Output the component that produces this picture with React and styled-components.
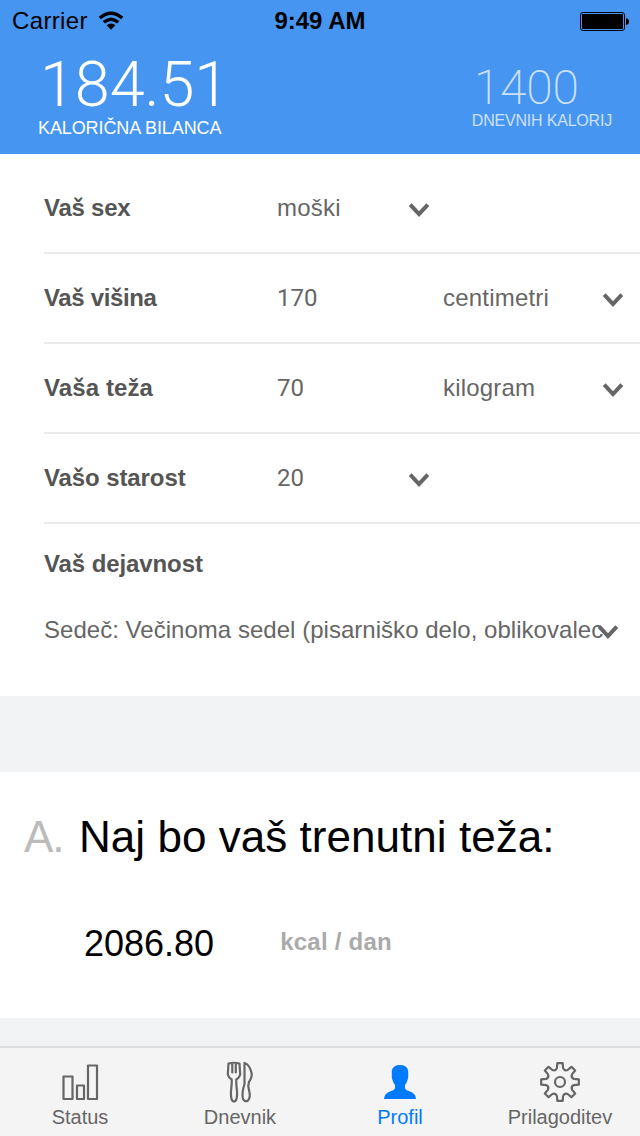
import React from "react";
import styled, { createGlobalStyle } from "styled-components";

const Global = createGlobalStyle`
  * { box-sizing: border-box; }
  body {
    margin: 0;
    background: #f2f3f5;
    font-family: "Liberation Sans", Arial, sans-serif;
    color: #000;
  }
`;

const Screen = styled.div`
  width: 640px;
  height: 1136px;
  display: flex;
  flex-direction: column;
  overflow: hidden;
  background: #f2f3f5;
`;

const Header = styled.header`
  height: 154px;
  background: #4595f1;
  flex: none;
`;

const StatusBar = styled.div`
  height: 40px;
  display: grid;
  grid-template-columns: 1fr auto 1fr;
  align-items: center;
  padding: 1px 11px 0 11px;
  font-size: 24px;
  line-height: 40px;
`;

const Carrier = styled.div`
  display: flex;
  align-items: center;
  gap: 10px;
  padding-left: 1px;
  letter-spacing: 0.35px;
`;

const Clock = styled.div`
  font-weight: 700;
`;

const BatteryIcon = styled.svg`
  justify-self: end;
`;

const Totals = styled.div`
  display: flex;
  justify-content: space-between;
  padding: 0 28px 0 38px;
`;

const Total = styled.div`
  color: #fff;
  padding-top: ${(p) => (p.$small ? 24 : 13)}px;
  opacity: ${(p) => (p.$small ? 0.72 : 1)};
`;

const Amount = styled.div`
  font-family: Roboto, "Liberation Sans", sans-serif;
  font-weight: ${(p) => (p.$small ? 200 : 300)};
  font-size: ${(p) => (p.$small ? 48 : 63)}px;
  line-height: ${(p) => (p.$small ? 47 : 64)}px;
  letter-spacing: ${(p) => (p.$small ? -0.2 : -0.1)}px;
  padding-left: 2px;
`;

const Caption = styled.div`
  font-size: ${(p) => (p.$small ? 16 : 18)}px;
  line-height: ${(p) => (p.$small ? 20 : 22)}px;
  letter-spacing: ${(p) => (p.$small ? -0.2 : -0.1)}px;
`;

const Form = styled.section`
  height: 542px;
  flex: none;
  background: #fff;
  padding: 10px 0 0 44px;
  font-size: 24px;
  color: #666;
`;

const Row = styled.div`
  display: grid;
  grid-template-columns: 233px 131px 35px 159px 1fr;
  align-items: center;
  height: 90px;
  border-bottom: 2px solid #ebebeb;
`;

const Label = styled.div`
  font-weight: 700;
  letter-spacing: ${(p) => p.$tracking ?? -0.1}px;
  color: #555;
`;

const Value = styled.div`
  font-family: ${(p) => (p.$numeric ? 'Roboto, "Liberation Sans", sans-serif' : "inherit")};
  letter-spacing: ${(p) => (p.$numeric ? 0 : 0.2)}px;
`;

const Chevron = styled.svg`
  display: block;
  margin-top: 4px;
`;

const Activity = styled.div`
  padding-top: 26px;
`;

const ActivityLabel = styled(Label)`
  line-height: 28px;
`;

const ActivitySelect = styled.div`
  display: flex;
  align-items: center;
  margin-top: 38px;
  line-height: 28px;
`;

const ActivityText = styled.div`
  width: 561px;
  margin-right: -8px;
  white-space: nowrap;
  overflow: hidden;
  letter-spacing: 0.03px;
`;

const Result = styled.section`
  height: 246px;
  flex: none;
  margin-top: 76px;
  background: #fff;
  padding: 40px 24px 0;
`;

const Title = styled.h1`
  display: flex;
  margin: 0;
  font-size: 44px;
  font-weight: 400;
  line-height: 50px;
`;

const Letter = styled.span`
  width: 55px;
  letter-spacing: -1px;
  color: #bbb;
`;

const TitleText = styled.span`
  letter-spacing: 0.04px;
`;

const Energy = styled.div`
  display: flex;
  align-items: baseline;
  gap: 66px;
  margin-top: 62px;
  padding-left: 60px;
  line-height: 40px;
`;

const EnergyValue = styled.div`
  font-size: 36px;
`;

const EnergyUnit = styled.div`
  position: relative;
  top: -6px;
  font-size: 24px;
  font-weight: 700;
  letter-spacing: 0.25px;
  color: #aaa;
`;

const TabBar = styled.nav`
  display: grid;
  grid-template-columns: repeat(4, 1fr);
  height: 90px;
  flex: none;
  margin-top: auto;
  background: #f4f4f4;
  border-top: 2px solid #dcdddd;
`;

const Tab = styled.div`
  display: flex;
  flex-direction: column;
  align-items: center;
  padding-top: 13px;
  color: ${(p) => (p.$active ? "#007aff" : "#666")};
  font-size: 20px;
  line-height: 24px;
`;

const TabIcon = styled.svg`
  display: block;
  margin-bottom: 2px;
`;

function Down() {
  return (
    <Chevron width="22" height="14" viewBox="0 0 22 14" fill="none" stroke="#666" strokeWidth="4">
      <path d="M2.2 1.6 11 11 19.8 1.6" />
    </Chevron>
  );
}

const line = { fill: "none", stroke: "currentColor", strokeWidth: 2.2, strokeLinejoin: "round", strokeLinecap: "round" };

// Eight tapered teeth joined by rounded valleys.
function gearPath() {
  const at = (a, r) => `${(20 + r * Math.cos(a)).toFixed(2)} ${(21 + r * Math.sin(a)).toFixed(2)}`;
  let d = "";
  for (let i = 0; i < 8; i++) {
    const mid = (i * Math.PI) / 4 - Math.PI / 2;
    d += `${i ? "L" : "M"}${at(mid - 0.22, 14.2)}L${at(mid - 0.14, 19)}L${at(mid + 0.14, 19)}L${at(mid + 0.22, 14.2)}`;
    d += `Q${at(mid + Math.PI / 8, 11.6)} ${at(mid + Math.PI / 4 - 0.22, 14.2)}`;
  }
  return `${d}Z`;
}

const tabs = [
  {
    name: "Status",
    icon: (
      <g {...line}>
        <rect x="3.500" y="15.500" width="9" height="22.500" />
        <rect x="17" y="24.500" width="7" height="13.500" />
        <rect x="28" y="4.500" width="9" height="33.500" />
      </g>
    ),
  },
  {
    name: "Dnevnik",
    icon: (
      <g {...line}>
        <path d="M8.500 2.500Q14 1 19.500 2.500L20.200 13.500Q19.500 16.500 16.300 18.500Q16 22 17 30Q17.500 40.500 14 40.500Q10.500 40.500 11 30Q12 22 11.700 18.500Q8.500 16.500 7.800 13.500Z M12.300 3V11.500 M15.800 3V11.500" />
        <path d="M24.500 2V23Q21.500 32 23 38Q25 41.500 28 39.500Q31 36.500 29 29Q27.500 25 29 21Q32.500 16 31.500 11.500Q29.500 3.500 24.500 2Z" />
      </g>
    ),
  },
  {
    name: "Profil",
    active: true,
    icon: (
      <path
        fill="currentColor"
        d="M20 4C25 4 28.500 6.500 28.200 11.500V14.500Q28.500 17 27.500 19Q26.500 22.500 25 24V27.500Q26 29.500 30 30.500Q36 32.500 36 38H4Q4 32.500 10 30.500Q14 29.500 15 27.500V24Q13.500 22.500 12.500 19Q11.500 17 11.800 14.500V11.500C11.500 6.500 15 4 20 4Z"
      />
    ),
  },
  {
    name: "Prilagoditev",
    icon: (
      <g {...line}>
        <path d={gearPath()} />
        <circle cx="20" cy="21" r="5" />
      </g>
    ),
  },
];

const rows = [
  { label: "Vaš sex", value: "moški", select: true, tracking: -0.25 },
  { label: "Vaš višina", value: "170", numeric: true, unit: "centimetri", tracking: -0.35 },
  { label: "Vaša teža", value: "70", numeric: true, unit: "kilogram", tracking: 0.1 },
  { label: "Vašo starost", value: "20", numeric: true, select: true },
];

export default function App() {
  return (
    <Screen>
      <Global />
      <Header>
        <StatusBar>
          <Carrier>
            Carrier
            <svg width="26" height="20" viewBox="0 0 26 20" fill="none" stroke="#000" strokeWidth="3.400">
              <path d="M1.800 7Q13-2.600 24.200 7M5.800 11.300Q13 5.200 20.200 11.300" />
              <path d="M8.600 14.200Q13 10.800 17.400 14.200L13 18.800Z" fill="#000" stroke="none" />
            </svg>
          </Carrier>
          <Clock>9:49 AM</Clock>
          <BatteryIcon width="49" height="19" viewBox="0 0 49 19">
            <rect x="0.500" y="0.500" width="44" height="18" rx="2.500" fill="none" stroke="#000" />
            <rect x="2" y="2" width="41" height="15" rx="1" />
            <path d="M46 6Q49 6.500 49 9.500T46 13Z" />
          </BatteryIcon>
        </StatusBar>
        <Totals>
          <Total>
            <Amount>184.51</Amount>
            <Caption>KALORIČNA BILANCA</Caption>
          </Total>
          <Total $small>
            <Amount $small>1400</Amount>
            <Caption $small>DNEVNIH KALORIJ</Caption>
          </Total>
        </Totals>
      </Header>
      <Form>
        {rows.map((row) => (
          <Row key={row.label}>
            <Label $tracking={row.tracking}>{row.label}</Label>
            <Value $numeric={row.numeric}>{row.value}</Value>
            {row.select ? <Down /> : <span />}
            <Value>{row.unit}</Value>
            {row.unit && <Down />}
          </Row>
        ))}
        <Activity>
          <ActivityLabel>Vaš dejavnost</ActivityLabel>
          <ActivitySelect>
            <ActivityText>Sedeč: Večinoma sedel (pisarniško delo, oblikovalec</ActivityText>
            <Down />
          </ActivitySelect>
        </Activity>
      </Form>
      <Result>
        <Title>
          <Letter>A.</Letter>
          <TitleText>Naj bo vaš trenutni teža:</TitleText>
        </Title>
        <Energy>
          <EnergyValue>2086.80</EnergyValue>
          <EnergyUnit>kcal / dan</EnergyUnit>
        </Energy>
      </Result>
      <TabBar>
        {tabs.map((tab) => (
          <Tab key={tab.name} $active={tab.active}>
            <TabIcon width="40" height="42" viewBox="0 0 40 42">
              {tab.icon}
            </TabIcon>
            {tab.name}
          </Tab>
        ))}
      </TabBar>
    </Screen>
  );
}
